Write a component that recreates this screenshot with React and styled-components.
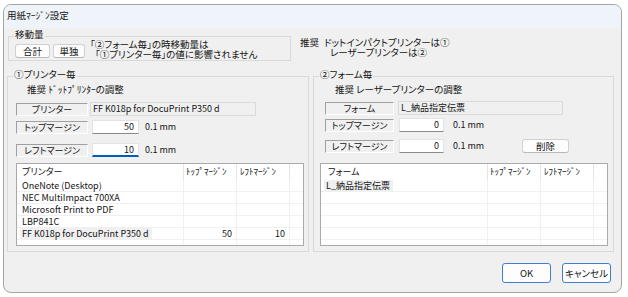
import React from "react";
import styled, { createGlobalStyle } from "styled-components";

const GlobalStyle = createGlobalStyle`
  html, body {
    margin: 0;
    padding: 0;
    background: #ffffff;
  }
  body {
    font-family: "Noto Sans CJK JP", "Noto Sans", sans-serif;
    font-size: 9.5px;
    line-height: 12px;
    color: #141414;
    font-feature-settings: "palt";
  }
  button {
    font-family: inherit;
    font-feature-settings: "palt";
  }
`;

const Window = styled.div`
  box-sizing: border-box;
  margin: 4px 0 0 3px;
  width: 619px;
  height: 289px;
  border: 1px solid #a5a5a5;
  border-radius: 8px;
  background: #f0f0f0;
  overflow: hidden;
  display: flex;
  flex-direction: column;
`;

const TitleBar = styled.div`
  flex: none;
  height: 23px;
  box-sizing: border-box;
  padding: 0 0 3px 3px;
  display: flex;
  align-items: center;
  background: #eef4f9;
`;

const Body = styled.div`
  flex: 1;
  display: flex;
  flex-direction: column;
  padding: 0 7px 0 3px;
`;

const TopRow = styled.div`
  display: flex;
  align-items: flex-start;
  margin-top: 8px;
`;

const MoveGroup = styled.div`
  position: relative;
  box-sizing: border-box;
  margin-left: 1px;
  width: 283px;
  height: 25px;
  border: 1px solid #d9d9d9;
  padding: 0 6px;
  display: flex;
  align-items: center;
  gap: 3px;
`;

const Legend = styled.span`
  position: absolute;
  left: 5px;
  top: -9px;
  padding: 0 1px;
  line-height: 12px;
  background: #f0f0f0;
`;

const SmallButton = styled.button`
  box-sizing: border-box;
  width: ${({ $w }) => $w}px;
  height: 14px;
  padding: 0;
  margin: ${({ $m }) => $m || "0"};
  font-size: 9.5px;
  line-height: 12px;
  color: #141414;
  background: #fdfdfd;
  border: 1px solid #d0d0d0;
  border-bottom-color: #b8b8b8;
  border-radius: 3px;
  align-self: ${({ $end }) => ($end ? "flex-end" : "center")};
`;

const Note = styled.div`
  margin-left: 2px;
`;

const NoteLine = styled.div`
  height: 10px;
  line-height: 10px;
  padding-left: ${({ $indent }) => $indent || 0}px;
  white-space: nowrap;
`;

const Recommend = styled.div`
  display: flex;
  gap: 5px;
  margin: 1px 0 0 9px;
  line-height: 10px;
`;

const Groups = styled.div`
  display: flex;
  gap: 4px;
  margin-top: 15px;
`;

const PanelGroup = styled.div`
  position: relative;
  box-sizing: border-box;
  width: ${({ $w }) => $w}px;
  height: 176px;
  border: 1px solid #d9d9d9;
  padding: ${({ $pad }) => $pad};
  display: flex;
  flex-direction: column;
`;

const RecText = styled.div`
  margin-top: 7px;
  padding-left: ${({ $indent }) => $indent}px;
  line-height: 10px;
  white-space: nowrap;
`;

const FieldRow = styled.div`
  display: flex;
  align-items: center;
  height: 14px;
  margin-top: ${({ $mt }) => $mt}px;
  padding-left: ${({ $pl }) => $pl || 0}px;
  font-size: 9px;
`;

const FieldLabel = styled.div`
  box-sizing: border-box;
  width: ${({ $w }) => $w}px;
  height: 13px;
  line-height: 11px;
  text-align: center;
  white-space: nowrap;
  border-top: 1px solid #a0a0a0;
  border-left: 1px solid #a0a0a0;
  border-right: 1px solid #ffffff;
  border-bottom: 1px solid #ffffff;
  background: #f0f0f0;
`;

const ReadOnlyBox = styled.div`
  box-sizing: border-box;
  width: ${({ $w }) => $w}px;
  height: 14px;
  margin-left: ${({ $ml }) => $ml}px;
  padding-left: 2px;
  line-height: 12px;
  border: 1px solid #dadada;
  background: #f0f0f0;
  white-space: nowrap;
`;

const NumberInput = styled.div`
  box-sizing: border-box;
  width: ${({ $w }) => $w}px;
  height: 14px;
  margin-left: ${({ $ml }) => $ml}px;
  padding-right: 4px;
  text-align: right;
  line-height: 12px;
  background: #ffffff;
  border: 1px solid #e3e3e3;
  border-bottom: ${({ $focus }) => ($focus ? "2px solid #005fb8" : "1px solid #8a8a8a")};
`;

const Unit = styled.span`
  margin-left: ${({ $ml }) => $ml}px;
  white-space: nowrap;
`;

const ListBox = styled.div`
  box-sizing: border-box;
  margin-top: auto;
  height: 83px;
  border: 1px solid #a9a9a9;
  background: #ffffff;
  overflow: hidden;
  font-size: 9px;
  display: grid;
  grid-template-columns: 167px 53px 53px 1fr;
  grid-template-rows: 16px;
  grid-auto-rows: 12px;
`;

const HeadCell = styled.div`
  box-sizing: border-box;
  padding-left: ${({ $pl }) => $pl}px;
  line-height: 16px;
  white-space: nowrap;
  box-shadow: ${({ $last }) => ($last ? "none" : "inset -1px 0 0 #e5e5e5")};
`;

const Cell = styled.div`
  box-sizing: border-box;
  line-height: 12px;
  white-space: nowrap;
  padding: ${({ $num }) => ($num ? "0 5px 0 0" : "0 0 0 3px")};
  text-align: ${({ $num }) => ($num ? "right" : "left")};
  box-shadow: ${({ $last }) =>
    $last ? "inset 0 -1px 0 #f0f0f0" : "inset 0 -1px 0 #f0f0f0, inset -1px 0 0 #f0f0f0"};
`;

const CellText = styled.span`
  display: inline-block;
  height: 11px;
  line-height: 12px;
  padding: 0 3px 0 2px;
  background: ${({ $selected }) => ($selected ? "#f0f0f0" : "transparent")};
`;

const Footer = styled.div`
  display: flex;
  justify-content: flex-end;
  gap: 11px;
  margin-top: 11px;
  padding-right: 3px;
`;

const DialogButton = styled.button`
  box-sizing: border-box;
  width: 49px;
  height: 20px;
  padding: 0;
  font-size: 9.5px;
  color: #141414;
  background: #fdfdfd;
  border: 1px solid #3d80d1;
  border-radius: 3px;
`;

const printers = [
  { name: "OneNote (Desktop)", top: "", left: "" },
  { name: "NEC MultiImpact 700XA", top: "", left: "" },
  { name: "Microsoft Print to PDF", top: "", left: "" },
  { name: "LBP841C", top: "", left: "" },
  { name: "FF K018p for DocuPrint P350 d", top: "50", left: "10", selected: true },
  { name: "", top: "", left: "" },
];

const forms = [
  { name: "L_納品指定伝票", top: "", left: "", selected: true },
  { name: "", top: "", left: "" },
  { name: "", top: "", left: "" },
  { name: "", top: "", left: "" },
  { name: "", top: "", left: "" },
  { name: "", top: "", left: "" },
];

function MarginList({ title, rows, headPad }) {
  return (
    <ListBox>
      <HeadCell $pl={headPad}>{title}</HeadCell>
      <HeadCell $pl={2}>ﾄｯﾌﾟﾏｰｼﾞﾝ</HeadCell>
      <HeadCell $pl={3}>ﾚﾌﾄﾏｰｼﾞﾝ</HeadCell>
      <HeadCell $last />
      {rows.map((r, i) => (
        <React.Fragment key={i}>
          <Cell>
            {r.name && <CellText $selected={r.selected}>{r.name}</CellText>}
          </Cell>
          <Cell $num>{r.top}</Cell>
          <Cell $num>{r.left}</Cell>
          <Cell $last />
        </React.Fragment>
      ))}
    </ListBox>
  );
}

export default function App() {
  return (
    <>
      <GlobalStyle />
      <Window>
        <TitleBar>用紙ﾏｰｼﾞﾝ設定</TitleBar>
        <Body>
          <TopRow>
            <MoveGroup>
              <Legend>移動量</Legend>
              <SmallButton $w={35} $end $m="0 0 2px 0">合計</SmallButton>
              <SmallButton $w={32} $end $m="0 0 2px 0">単独</SmallButton>
              <Note>
                <NoteLine>「②フォーム毎」の時移動量は</NoteLine>
                <NoteLine $indent={5}>「①プリンター毎」の値に影響されません</NoteLine>
              </Note>
            </MoveGroup>
            <Recommend>
              <span>推奨</span>
              <div>
                <NoteLine>ドットインパクトプリンターは①</NoteLine>
                <NoteLine $indent={6}>レーザープリンターは②</NoteLine>
              </div>
            </Recommend>
          </TopRow>

          <Groups>
            <PanelGroup $w={302} $pad="0 4px 5px 8px">
              <Legend>①プリンター毎</Legend>
              <RecText $indent={11}>推奨 ﾄﾞｯﾄﾌﾟﾘﾝﾀｰの調整</RecText>
              <FieldRow $mt={8}>
                <FieldLabel $w={72}>プリンター</FieldLabel>
                <ReadOnlyBox $w={166} $ml={2}>FF K018p for DocuPrint P350 d</ReadOnlyBox>
              </FieldRow>
              <FieldRow $mt={4}>
                <FieldLabel $w={72}>トップマージン</FieldLabel>
                <NumberInput $w={47} $ml={4}>50</NumberInput>
                <Unit $ml={6}>0.1 mm</Unit>
              </FieldRow>
              <FieldRow $mt={9}>
                <FieldLabel $w={72}>レフトマージン</FieldLabel>
                <NumberInput $w={47} $ml={4} $focus>10</NumberInput>
                <Unit $ml={6}>0.1 mm</Unit>
              </FieldRow>
              <MarginList title="プリンター" rows={printers} headPad={5} />
            </PanelGroup>

            <PanelGroup $w={301} $pad="0 5px 5px 6px">
              <Legend>②フォーム毎</Legend>
              <RecText $indent={15}>推奨 レーザープリンターの調整</RecText>
              <FieldRow $mt={7} $pl={5}>
                <FieldLabel $w={69}>フォーム</FieldLabel>
                <ReadOnlyBox $w={165} $ml={4}>L_納品指定伝票</ReadOnlyBox>
              </FieldRow>
              <FieldRow $mt={3} $pl={5}>
                <FieldLabel $w={69}>トップマージン</FieldLabel>
                <NumberInput $w={45} $ml={5}>0</NumberInput>
                <Unit $ml={9}>0.1 mm</Unit>
              </FieldRow>
              <FieldRow $mt={7} $pl={5}>
                <FieldLabel $w={69}>レフトマージン</FieldLabel>
                <NumberInput $w={45} $ml={5}>0</NumberInput>
                <Unit $ml={9}>0.1 mm</Unit>
                <SmallButton $w={47} $m="0 39px 0 auto">削除</SmallButton>
              </FieldRow>
              <MarginList title="フォーム" rows={forms} headPad={7} />
            </PanelGroup>
          </Groups>

          <Footer>
            <DialogButton>OK</DialogButton>
            <DialogButton>キャンセル</DialogButton>
          </Footer>
        </Body>
      </Window>
    </>
  );
}
